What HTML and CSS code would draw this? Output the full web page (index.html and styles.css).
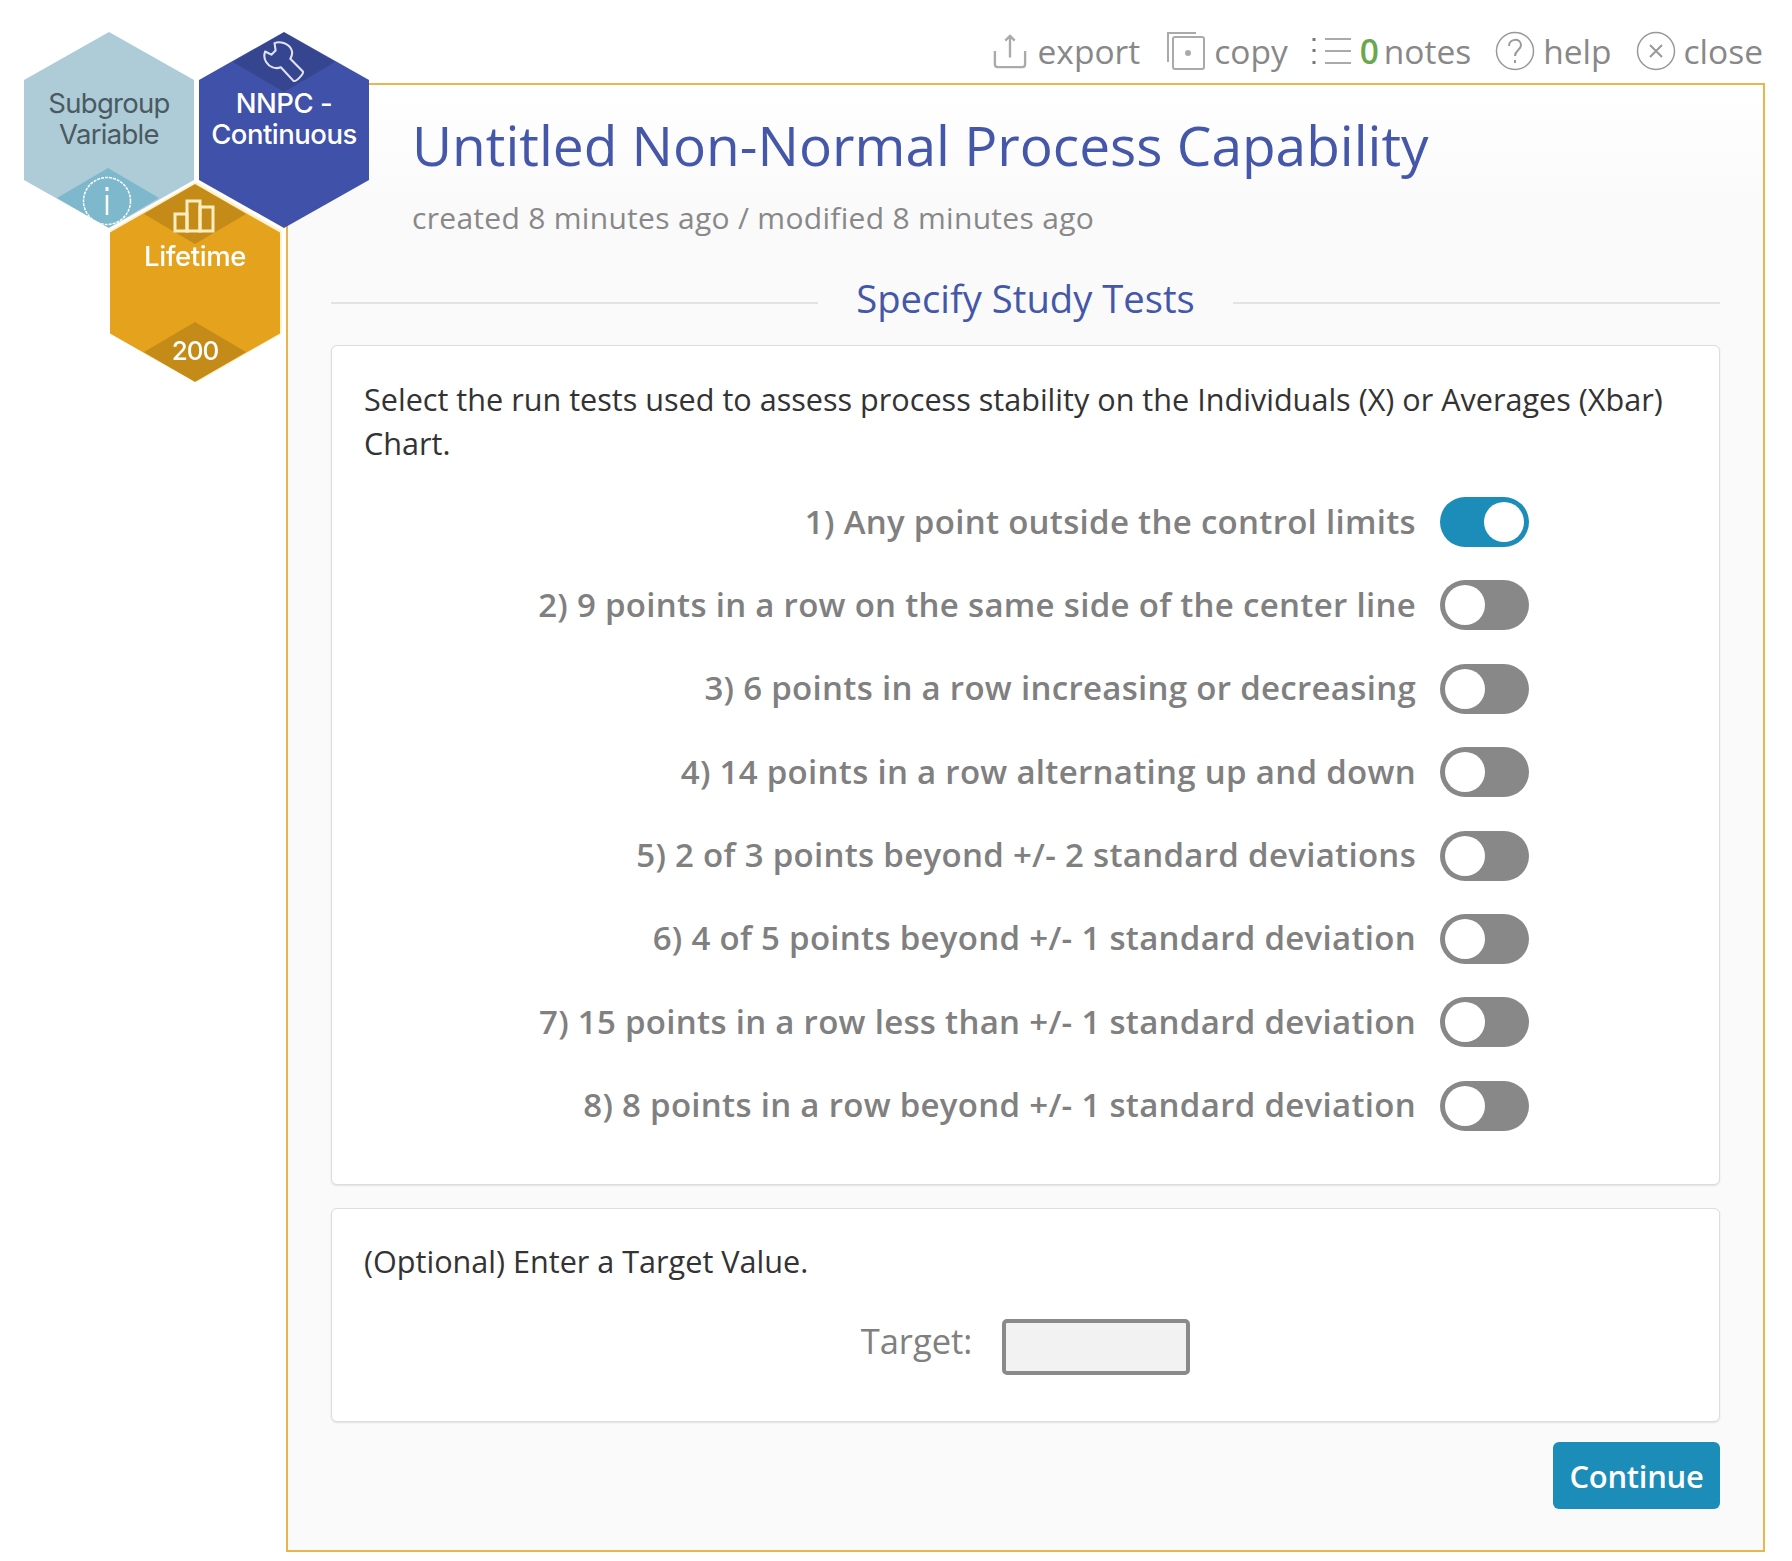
FILE: index.html
```html
<!DOCTYPE html>
<html lang="en">
<head>
    <meta charset="UTF-8">
    <meta name="viewport" content="width=device-width, initial-scale=1.0">
    <title>Untitled Non-Normal Process Capability</title>
    <link rel="stylesheet" href="styles.css">
</head>
<body>
    <div class="hex hex-variable">
        <div class="hex-label">Subgroup<br>Variable</div>
        <div class="diamond diamond-info"></div>
        <svg class="hex-icon icon-info" viewBox="0 0 50 50" fill="none" stroke="#fff">
            <circle cx="25" cy="25" r="23.5" stroke-width="1.5" stroke-dasharray="3 1"/>
            <path d="M25 19v20" stroke-width="2.5"/>
            <path d="M25 11v4" stroke-width="3"/>
        </svg>
    </div>
    <div class="hex hex-tool">
        <div class="diamond diamond-top"></div>
        <svg class="hex-icon icon-wrench" viewBox="0 0 40 40" fill="none" stroke="#dfe3f5" stroke-width="2" stroke-linejoin="round">
            <path d="M11 2C16 0 24 2 27 8C29 12 27 15 26 17L38 29C39 31 32 39 29 38L17 25C12 27 6 25 3 20C1 17 1 13 2 10L8 13L12 9Z"/>
        </svg>
        <div class="hex-label">NNPC -<br>Continuous</div>
    </div>
    <div class="hex-edge">
        <div class="hex hex-life">
            <div class="diamond diamond-top"></div>
            <svg class="hex-icon icon-bars" viewBox="0 0 42 34" fill="none" stroke="#ffeebf" stroke-width="3">
                <rect x="2" y="15" width="12" height="17"/>
                <rect x="14" y="2" width="13" height="30"/>
                <rect x="27" y="8" width="13" height="24"/>
            </svg>
            <div class="hex-label">Lifetime</div>
            <div class="diamond diamond-bottom"></div>
            <div class="hex-count">200</div>
        </div>
    </div>

    <div class="toolbar">
        <a class="tool tool-export">
            <svg class="tool-icon icon-export" viewBox="0 0 36 40" fill="none" stroke="#aaa" stroke-width="2.5">
                <path d="M2 20v14q0 3 3 3h26q3 0 3-3V20"/>
                <path d="M18 27V4M13 9l5-5 5 5"/>
            </svg>
            export
        </a>
        <a class="tool">
            <svg class="tool-icon" viewBox="0 0 40 40" fill="none" stroke="#aaa" stroke-width="2">
                <path d="M2 31V2h28"/>
                <rect x="7" y="6" width="31" height="32" rx="2"/>
                <circle cx="22" cy="22" r="3" fill="#aaa" stroke="none"/>
            </svg>
            copy
        </a>
        <a class="tool">
            <svg class="tool-icon" viewBox="0 0 40 30" fill="none" stroke="#aaa" stroke-width="2">
                <path d="M2 2v3M2 13v3M2 25v3" stroke="#777" stroke-width="3"/>
                <path d="M13 3h26M13 15h26M13 27h26"/>
            </svg>
            <span class="count">0</span>notes
        </a>
        <a class="tool">
            <svg class="tool-icon" viewBox="0 0 40 40" fill="none" stroke="#999" stroke-width="1.5">
                <circle cx="20" cy="20" r="18.5"/>
                <path d="M14 15c0-8 12-8 12-1 0 5-6 5-6 11M20 29v3" stroke-width="2"/>
            </svg>
            help
        </a>
        <a class="tool">
            <svg class="tool-icon" viewBox="0 0 40 40" fill="none" stroke="#999" stroke-width="1.5">
                <circle cx="20" cy="20" r="18.5"/>
                <path d="M14 14l12 12M26 14L14 26" stroke-width="2"/>
            </svg>
            close
        </a>
    </div>

    <div class="panel">
        <h1 class="title">Untitled Non-Normal Process Capability</h1>
        <p class="dates">created 8 minutes ago / modified 8 minutes ago</p>

        <div class="section-head">
            <span>Specify Study Tests</span>
        </div>

        <div class="card tests-card">
            <p class="intro">Select the run tests used to assess process stability on the Individuals (X) or Averages (Xbar) Chart.</p>
            <div class="test-row"><label>1) Any point outside the control limits</label><span class="switch on"></span></div>
            <div class="test-row"><label>2) 9 points in a row on the same side of the center line</label><span class="switch"></span></div>
            <div class="test-row"><label>3) 6 points in a row increasing or decreasing</label><span class="switch"></span></div>
            <div class="test-row"><label>4) 14 points in a row alternating up and down</label><span class="switch"></span></div>
            <div class="test-row"><label>5) 2 of 3 points beyond +/- 2 standard deviations</label><span class="switch"></span></div>
            <div class="test-row"><label>6) 4 of 5 points beyond +/- 1 standard deviation</label><span class="switch"></span></div>
            <div class="test-row"><label>7) 15 points in a row less than +/- 1 standard deviation</label><span class="switch"></span></div>
            <div class="test-row"><label>8) 8 points in a row beyond +/- 1 standard deviation</label><span class="switch"></span></div>
        </div>

        <div class="card target-card">
            <p class="intro">(Optional) Enter a Target Value.</p>
            <div class="target-row">
                <label for="target">Target:</label>
                <input type="text" id="target">
            </div>
        </div>

        <div class="actions">
            <button type="button">Continue</button>
        </div>
    </div>
</body>
</html>
```

FILE: styles.css
```css
body {
    font-family: "Open Sans", sans-serif;
    background-color: #fff;
    margin: 0;
    height: 1561px;
    overflow: hidden;
}

/* hexagons */
.hex {
    position: absolute;
    width: 170px;
    height: 196px;
    clip-path: polygon(50% 0, 100% 24.5%, 100% 75.5%, 50% 100%, 0 75.5%, 0 24.5%);
    text-align: center;
    z-index: 1;
}
.hex-variable {
    left: 24px;
    top: 32px;
    background-color: #aecbd8;
    color: #4a5a60;
}
.hex-tool {
    left: 199px;
    top: 32px;
    background-color: #3f51a8;
    color: #fff;
}
.hex-edge {
    position: absolute;
    left: 0;
    top: 0;
    z-index: 2;
    filter: drop-shadow(0 -2px 0 #fff3d6) drop-shadow(2px 0 0 #fff3d6);
}
.hex-life {
    left: 110px;
    top: 184px;
    height: 198px;
    background-color: #e5a21d;
    color: #fff;
}
.hex-label {
    position: absolute;
    left: 0;
    right: 0;
    top: 56px;
    font-family: "Inter", sans-serif;
    font-size: 27.5px;
    line-height: 31px;
    letter-spacing: -0.7px;
}
.hex-tool .hex-label {
    font-weight: 500;
    letter-spacing: -0.5px;
}
.hex-life .hex-label {
    top: 57px;
    font-weight: 500;
    letter-spacing: -0.4px;
}
.hex-count {
    position: absolute;
    left: 0;
    right: 0;
    bottom: 16px;
    font-family: "Inter", sans-serif;
    font-size: 26px;
    line-height: 30px;
    letter-spacing: -1px;
    font-weight: 500;
}
.diamond {
    position: absolute;
    left: 34px;
    width: 102px;
    height: 60px;
    clip-path: polygon(50% 0, 100% 50%, 50% 100%, 0 50%);
}
.diamond-top {
    top: 0;
    background-color: rgba(0, 0, 0, 0.14);
}
.diamond-bottom {
    bottom: 0;
    background-color: rgba(0, 0, 0, 0.14);
}
.diamond-info {
    top: 136px;
    left: 33px;
    background-color: #7db8cd;
}
.hex-icon {
    position: absolute;
}
.icon-info {
    left: 58px;
    top: 144px;
    width: 50px;
    height: 50px;
}
.icon-wrench {
    left: 64px;
    top: 9px;
    width: 42px;
    height: 42px;
}
.icon-bars {
    left: 63px;
    top: 15px;
    width: 42px;
    height: 34px;
}

/* toolbar */
.toolbar {
    display: flex;
    justify-content: flex-end;
    align-items: center;
    height: 83px;
    padding: 18px 29px 0 0;
    box-sizing: border-box;
    gap: 24px;
}
.tool {
    display: flex;
    align-items: center;
    gap: 8px;
    color: #888;
    font-size: 33.5px;
    line-height: 40px;
}
.tool-export {
    margin-right: 2px;
}
.tool-icon {
    width: 40px;
    height: 40px;
}
.icon-export {
    width: 34px;
    margin-right: 3px;
}
.count {
    color: #6aa84f;
    font-weight: 600;
    margin-right: -3px;
}

/* main panel */
.panel {
    margin-left: 286px;
    width: 1479px;
    height: 1469px;
    box-sizing: border-box;
    padding: 0 43px;
    border: 2px solid #e8b64c;
    background: linear-gradient(#fff, #fafafa 120px);
}
.title {
    margin: 25px 0 0 0;
    padding-left: 81px;
    font-size: 55px;
    line-height: 70px;
    font-weight: 400;
    color: #4557a8;
}
.dates {
    margin: 18px 0 0 0;
    padding-left: 81px;
    font-size: 30px;
    line-height: 40px;
    color: #888;
    letter-spacing: 0.3px;
}
.section-head {
    display: flex;
    align-items: center;
    justify-content: center;
    margin-top: 38px;
    height: 44px;
    font-size: 38.2px;
    color: #4557a8;
    gap: 38px;
}
.section-head::before,
.section-head::after {
    content: "";
    flex: 1;
    height: 2px;
    margin-top: 10px;
    background-color: #e3e3e3;
}

.card {
    background-color: #fff;
    border: 1px solid #ddd;
    border-radius: 6px;
    box-shadow: 0 1px 2px rgba(0, 0, 0, 0.1);
    box-sizing: border-box;
    padding: 31px 32px 0 32px;
}
.tests-card {
    margin-top: 25px;
    height: 840px;
}
.target-card {
    margin-top: 23px;
    height: 214px;
    padding-top: 30px;
}
.intro {
    margin: 0;
    font-size: 30.6px;
    line-height: 44px;
    color: #333;
}
.test-row {
    display: flex;
    justify-content: flex-end;
    align-items: center;
    height: 50px;
    margin-top: 33.4px;
    padding-right: 158px;
    gap: 24px;
    font-size: 33px;
    font-weight: 600;
    color: #808080;
    letter-spacing: 0.3px;
}
.test-row:nth-child(2) {
    margin-top: 32px;
}
.test-row label {
    padding-bottom: 2px;
}
.switch {
    position: relative;
    width: 89px;
    height: 50px;
    border-radius: 25px;
    background-color: #888;
}
.switch::after {
    content: "";
    position: absolute;
    left: 5px;
    top: 5px;
    width: 40px;
    height: 40px;
    border-radius: 50%;
    background-color: #fff;
}
.switch.on {
    background-color: #1c8cb8;
}
.switch.on::after {
    left: 44px;
}
.target-row {
    display: flex;
    justify-content: center;
    align-items: center;
    margin-top: 36px;
    gap: 30px;
    font-size: 34.5px;
    color: #808080;
}
.target-row label {
    margin-top: -13px;
}
.target-row input {
    width: 188px;
    height: 56px;
    box-sizing: border-box;
    border: 4px solid #8a8a8a;
    border-radius: 5px;
    background-color: #f2f2f2;
}
.actions {
    display: flex;
    justify-content: flex-end;
    margin-top: 20px;
}
button {
    width: 167px;
    height: 67px;
    background-color: #1c8cb8;
    color: #fff;
    border: none;
    border-radius: 6px;
    font-family: "Open Sans", sans-serif;
    font-size: 31px;
    font-weight: 600;
    letter-spacing: -0.3px;
}
```
